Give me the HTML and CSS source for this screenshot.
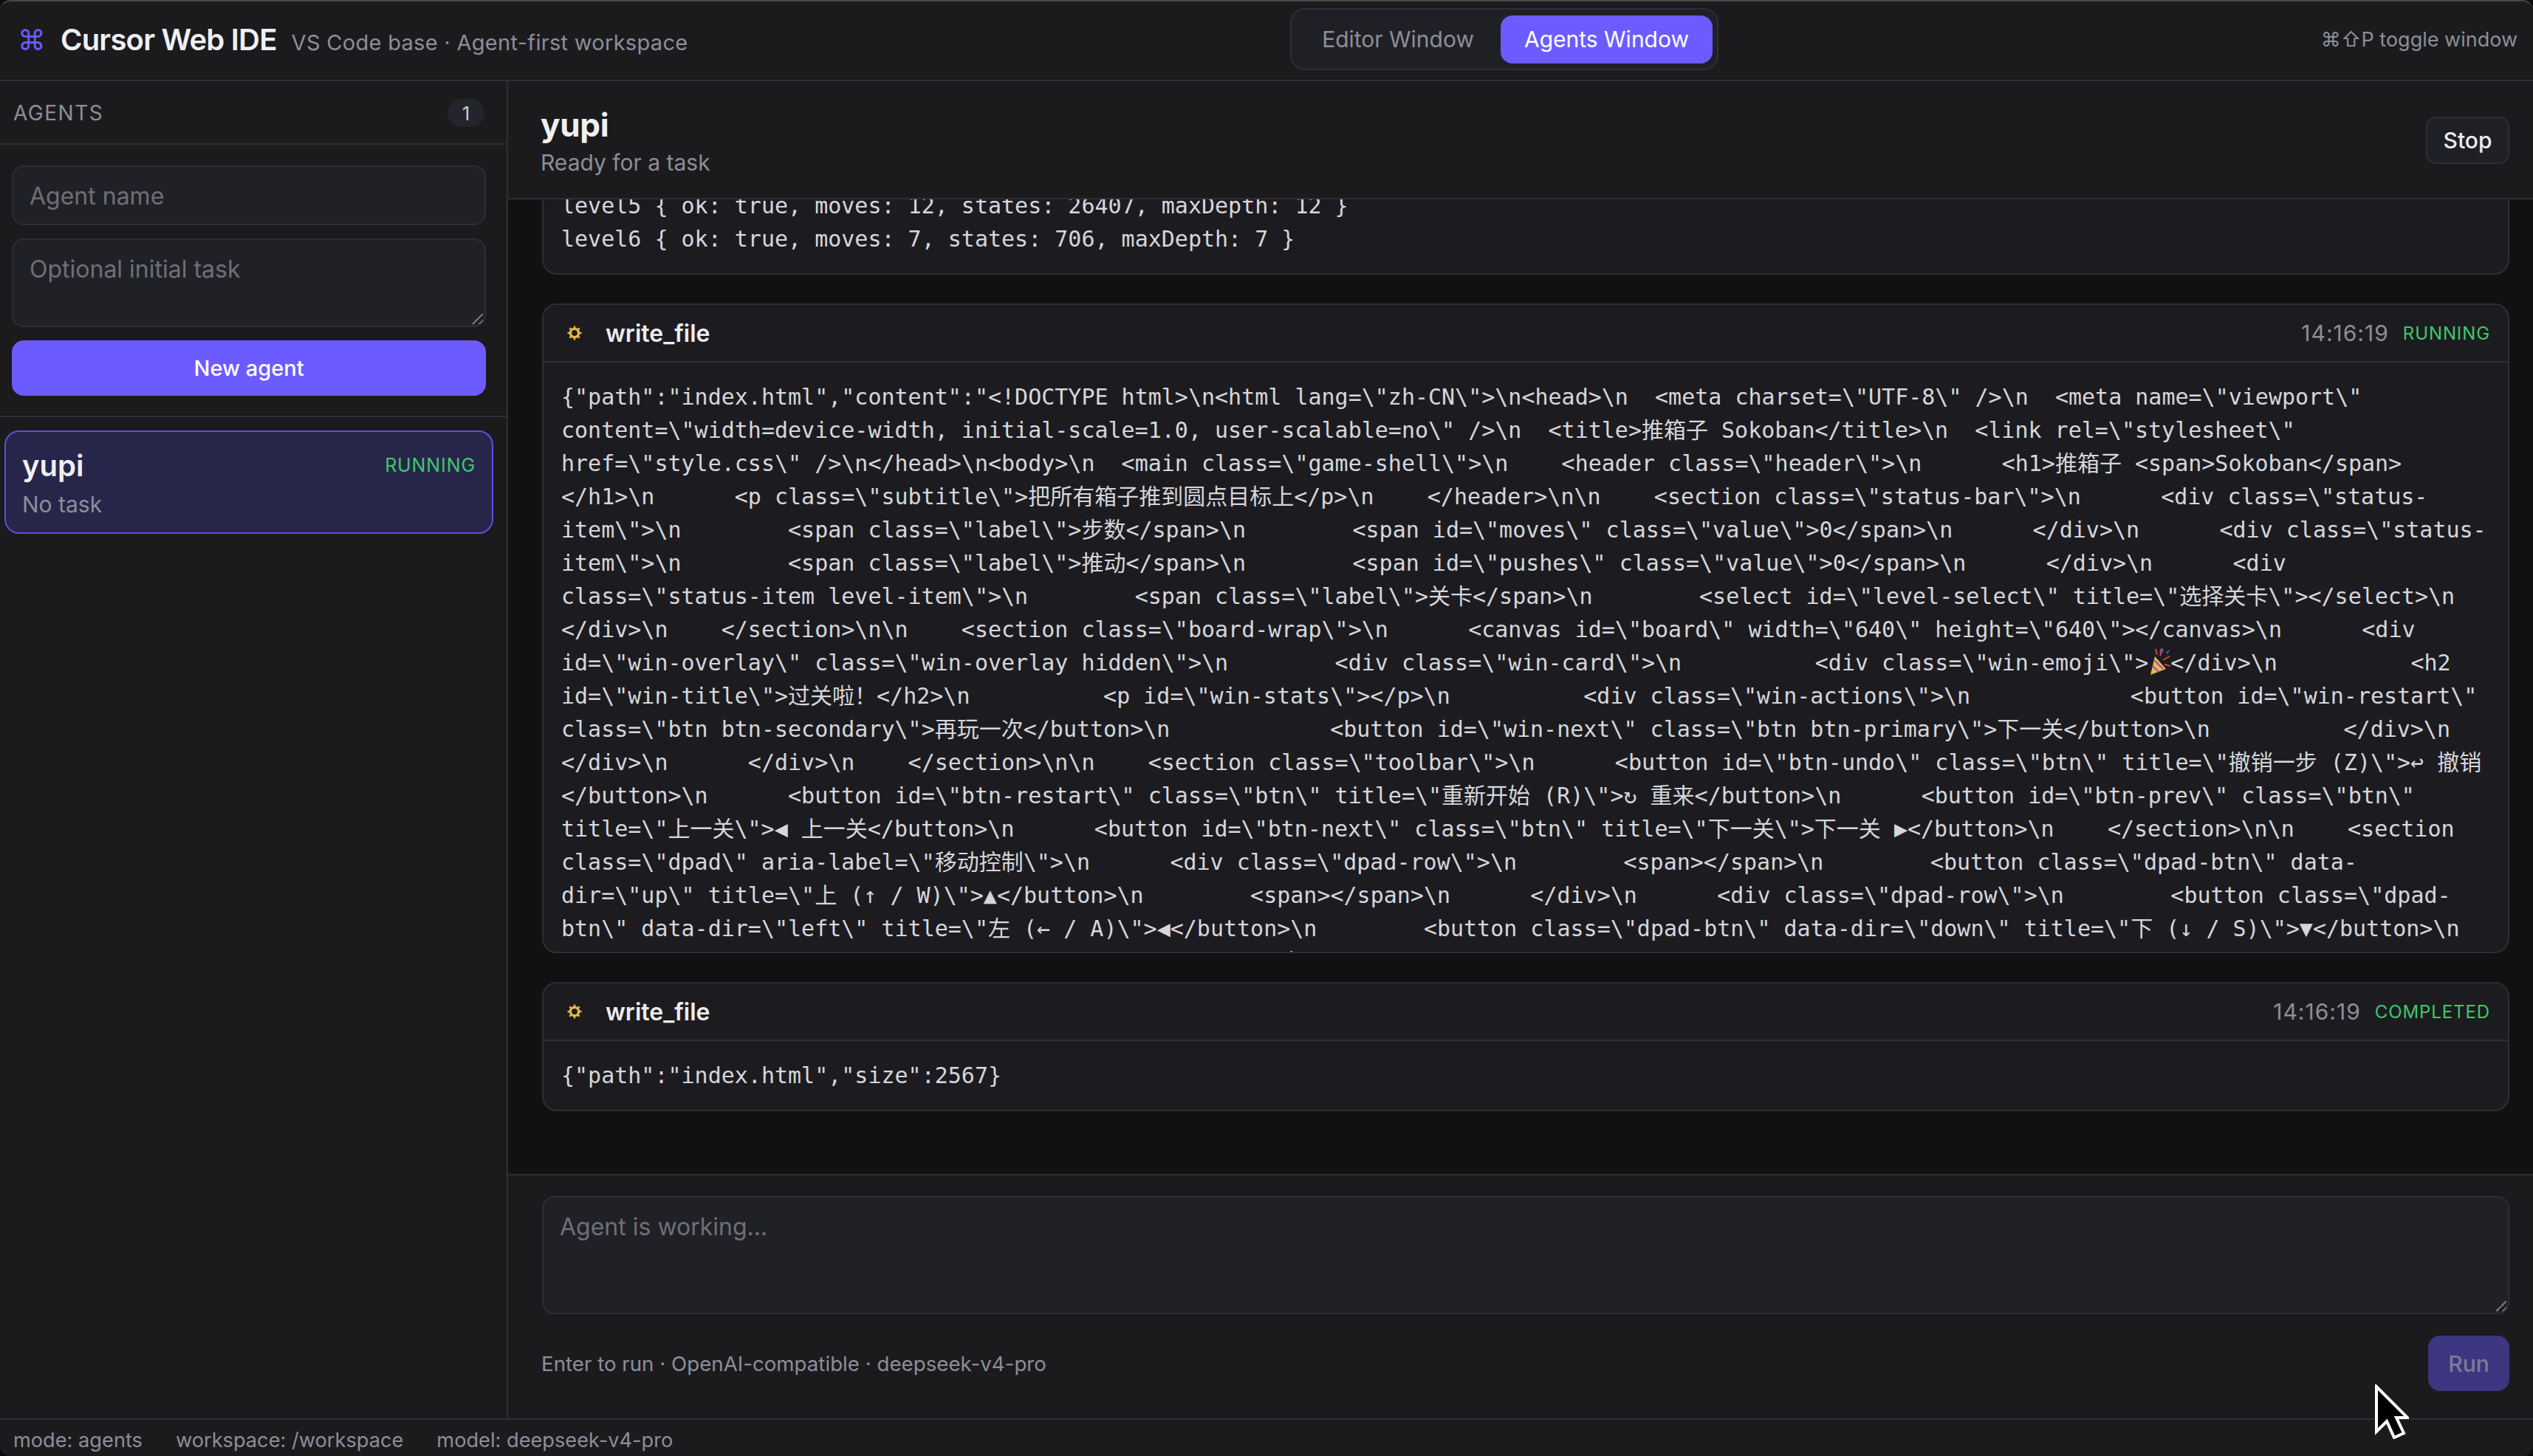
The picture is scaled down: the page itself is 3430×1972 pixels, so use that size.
FILE: index.html
```html
<!DOCTYPE html>
<html lang="en">
<head>
  <meta charset="UTF-8">
  <meta name="viewport" content="width=device-width, initial-scale=1.0">
  <title>Cursor Web IDE</title>
  <link rel="stylesheet" href="styles.css">
</head>
<body>
  <div class="app">
    <header class="topbar">
      <div class="brand">
        <span class="brand-icon">⌘</span>
        <span class="brand-name">Cursor Web IDE</span>
        <span class="brand-sub">VS Code base · Agent-first workspace</span>
      </div>
      <div class="switcher">
        <button class="switch-btn">Editor Window</button>
        <button class="switch-btn active">Agents Window</button>
      </div>
      <div class="hint">⌘⇧P toggle window</div>
    </header>

    <div class="workspace">
      <aside class="sidebar">
        <div class="side-head">
          <span class="side-title">AGENTS</span>
          <span class="count">1</span>
        </div>
        <div class="new-agent">
          <input class="field" type="text" placeholder="Agent name">
          <textarea class="field field-area" placeholder="Optional initial task"></textarea>
          <button class="primary-btn">New agent</button>
        </div>
        <div class="agent-list">
          <div class="agent-card">
            <div class="agent-row">
              <span class="agent-name">yupi</span>
              <span class="status-tag status-tag-big">RUNNING</span>
            </div>
            <div class="agent-task">No task</div>
          </div>
        </div>
      </aside>

      <main class="main">
        <div class="main-head">
          <div>
            <div class="main-title">yupi</div>
            <div class="main-sub">Ready for a task</div>
          </div>
          <button class="stop-btn">Stop</button>
        </div>

        <div class="messages">
          <section class="tool-card tool-card-scrolled">
            <div class="tool-body">level5 { ok: true, moves: 12, states: 26407, maxDepth: 12 }
level6 { ok: true, moves: 7, states: 706, maxDepth: 7 }</div>
          </section>

          <section class="tool-card">
            <div class="tool-head">
              <svg class="gear" viewBox="0 0 20 20"><use href="#gear-icon"></use></svg>
              <span class="tool-name">write_file</span>
              <span class="tool-time">14:16:19</span>
              <span class="status-tag">RUNNING</span>
            </div>
            <div class="tool-body tool-body-long">{"path":"index.html","content":"&lt;!DOCTYPE html&gt;\n&lt;html lang=\"zh-CN\"&gt;\n&lt;head&gt;\n  &lt;meta charset=\"UTF-8\" /&gt;\n  &lt;meta name=\"viewport\" content=\"width=device-width, initial-scale=1.0, user-scalable=no\" /&gt;\n  &lt;title&gt;推箱子 Sokoban&lt;/title&gt;\n  &lt;link rel=\"stylesheet\" href=\"style.css\" /&gt;\n&lt;/head&gt;\n&lt;body&gt;\n  &lt;main class=\"game-shell\"&gt;\n    &lt;header class=\"header\"&gt;\n      &lt;h1&gt;推箱子 &lt;span&gt;Sokoban&lt;/span&gt;&lt;/h1&gt;\n      &lt;p class=\"subtitle\"&gt;把所有箱子推到圆点目标上&lt;/p&gt;\n    &lt;/header&gt;\n\n    &lt;section class=\"status-bar\"&gt;\n      &lt;div class=\"status-item\"&gt;\n        &lt;span class=\"label\"&gt;步数&lt;/span&gt;\n        &lt;span id=\"moves\" class=\"value\"&gt;0&lt;/span&gt;\n      &lt;/div&gt;\n      &lt;div class=\"status-item\"&gt;\n        &lt;span class=\"label\"&gt;推动&lt;/span&gt;\n        &lt;span id=\"pushes\" class=\"value\"&gt;0&lt;/span&gt;\n      &lt;/div&gt;\n      &lt;div class=\"status-item level-item\"&gt;\n        &lt;span class=\"label\"&gt;关卡&lt;/span&gt;\n        &lt;select id=\"level-select\" title=\"选择关卡\"&gt;&lt;/select&gt;\n      &lt;/div&gt;\n    &lt;/section&gt;\n\n    &lt;section class=\"board-wrap\"&gt;\n      &lt;canvas id=\"board\" width=\"640\" height=\"640\"&gt;&lt;/canvas&gt;\n      &lt;div id=\"win-overlay\" class=\"win-overlay hidden\"&gt;\n        &lt;div class=\"win-card\"&gt;\n          &lt;div class=\"win-emoji\"&gt;<svg class="party" viewBox="0 0 30 36"><path d="M9 11 L3 36 L24 28 Z" fill="#e9b949"/><path d="M6 24 L14 32 M8 16 L20 28" stroke="#8a4fd0" stroke-width="2"/><path d="M12 9 L10 1 M16 10 L20 1 M20 16 L29 11 M22 22 L30 24" stroke="#d8433f" stroke-width="2"/><path d="M16 6 L18 0 M25 7 L28 3" stroke="#3c6fd8" stroke-width="2"/></svg>&lt;/div&gt;\n          &lt;h2 id=\"win-title\"&gt;过关啦！&lt;/h2&gt;\n          &lt;p id=\"win-stats\"&gt;&lt;/p&gt;\n          &lt;div class=\"win-actions\"&gt;\n            &lt;button id=\"win-restart\" class=\"btn btn-secondary\"&gt;再玩一次&lt;/button&gt;\n            &lt;button id=\"win-next\" class=\"btn btn-primary\"&gt;下一关&lt;/button&gt;\n          &lt;/div&gt;\n        &lt;/div&gt;\n      &lt;/div&gt;\n    &lt;/section&gt;\n\n    &lt;section class=\"toolbar\"&gt;\n      &lt;button id=\"btn-undo\" class=\"btn\" title=\"撤销一步 (Z)\"&gt;↩ 撤销&lt;/button&gt;\n      &lt;button id=\"btn-restart\" class=\"btn\" title=\"重新开始 (R)\"&gt;↻ 重来&lt;/button&gt;\n      &lt;button id=\"btn-prev\" class=\"btn\" title=\"上一关\"&gt;◀ 上一关&lt;/button&gt;\n      &lt;button id=\"btn-next\" class=\"btn\" title=\"下一关\"&gt;下一关 ▶&lt;/button&gt;\n    &lt;/section&gt;\n\n    &lt;section class=\"dpad\" aria-label=\"移动控制\"&gt;\n      &lt;div class=\"dpad-row\"&gt;\n        &lt;span&gt;&lt;/span&gt;\n        &lt;button class=\"dpad-btn\" data-dir=\"up\" title=\"上 (↑ / W)\"&gt;▲&lt;/button&gt;\n        &lt;span&gt;&lt;/span&gt;\n      &lt;/div&gt;\n      &lt;div class=\"dpad-row\"&gt;\n        &lt;button class=\"dpad-btn\" data-dir=\"left\" title=\"左 (← / A)\"&gt;◀&lt;/button&gt;\n        &lt;button class=\"dpad-btn\" data-dir=\"down\" title=\"下 (↓ / S)\"&gt;▼&lt;/button&gt;\n        &lt;button class=\"dpad-btn\" data-dir=\"right\" title=\"右 (→ / D)\"&gt;▶&lt;/button&gt;\n      &lt;/div&gt;</div>
          </section>

          <section class="tool-card">
            <div class="tool-head">
              <svg class="gear" viewBox="0 0 20 20"><use href="#gear-icon"></use></svg>
              <span class="tool-name">write_file</span>
              <span class="tool-time">14:16:19</span>
              <span class="status-tag">COMPLETED</span>
            </div>
            <div class="tool-body">{"path":"index.html","size":2567}</div>
          </section>
        </div>

        <div class="composer">
          <textarea class="field composer-input" placeholder="Agent is working..."></textarea>
          <div class="composer-foot">
            <span class="composer-hint">Enter to run · OpenAI-compatible · deepseek-v4-pro</span>
            <button class="run-btn">Run</button>
          </div>
        </div>
      </main>
    </div>

    <footer class="statusbar">
      <span>mode: agents</span>
      <span>workspace: /workspace</span>
      <span>model: deepseek-v4-pro</span>
    </footer>
  </div>

  <svg class="pointer" viewBox="0 0 46 74">
    <path d="M2 3 L2 64 L16 50 L26 72 L39 66 L29 45 L44 45 Z" fill="#000" stroke="#fff" stroke-width="4"/>
  </svg>

  <svg class="icon-defs">
    <symbol id="gear-icon" viewBox="0 0 20 20">
      <circle cx="10" cy="10" r="5.6" fill="none" stroke="#e5b84a" stroke-width="3.4"/>
      <g stroke="#e5b84a" stroke-width="2.4">
        <path d="M10 0.5V4M10 16V19.5M0.5 10H4M16 10H19.5M3.3 3.3L5.7 5.7M14.3 14.3L16.7 16.7M16.7 3.3L14.3 5.7M5.7 14.3L3.3 16.7"/>
      </g>
    </symbol>
  </svg>
</body>
</html>
```

FILE: styles.css
```css
* {
  box-sizing: border-box;
}

html,
body {
  height: 100%;
}

body {
  margin: 0;
  background-color: #0b0b0c;
  color: #ececf0;
  font-family: 'Inter', 'Noto Sans', sans-serif;
  color-scheme: dark;
  overflow: hidden;
}

button,
input,
textarea {
  font-family: inherit;
}

.app {
  height: 100%;
  display: flex;
  flex-direction: column;
  background-color: #1b1b1e;
  border-top: 2px solid #47474b;
  border-radius: 14px;
  overflow: hidden;
}

/* top bar */
.topbar {
  height: 108px;
  flex-shrink: 0;
  display: flex;
  justify-content: space-between;
  align-items: center;
  padding: 0 21px 4px 24px;
  border-bottom: 2px solid #2e2e36;
}

.brand {
  display: flex;
  align-items: baseline;
  gap: 20px;
}

.brand-icon {
  color: #6c5cff;
  font-size: 38px;
  line-height: 1;
  font-family: 'DejaVu Sans', sans-serif;
}

.brand-name {
  font-size: 40px;
  font-weight: 600;
  letter-spacing: -0.8px;
  color: #f0f0f3;
}

.brand-sub {
  font-size: 29px;
  color: #8e8e98;
  letter-spacing: 0.3px;
}

.switcher {
  display: flex;
  align-items: center;
  gap: 4px;
  height: 84px;
  padding: 0 6px 0 9px;
  background-color: #1f2025;
  border: 2px solid #2e2e36;
  border-radius: 20px;
}

.switch-btn {
  height: 65px;
  padding: 0 32px;
  border: none;
  border-radius: 16px;
  background: none;
  color: #8e8e98;
  font-size: 30px;
}

.switch-btn.active {
  background-color: #6c5cff;
  color: #fff;
}

.hint {
  font-size: 27px;
  color: #8e8e98;
  font-family: 'Inter', 'DejaVu Sans', sans-serif;
}

.workspace {
  flex: 1;
  min-height: 0;
  display: flex;
}

/* sidebar */
.sidebar {
  width: 688px;
  flex-shrink: 0;
  border-right: 2px solid #2e2e36;
  display: flex;
  flex-direction: column;
}

.side-head {
  height: 86px;
  flex-shrink: 0;
  display: flex;
  justify-content: space-between;
  align-items: center;
  padding: 2px 30px 0 18px;
  border-bottom: 2px solid #2e2e36;
}

.side-title {
  font-size: 28px;
  letter-spacing: 1.5px;
  color: #8e8e98;
}

.count {
  width: 50px;
  height: 38px;
  border-radius: 19px;
  background-color: #24252c;
  font-size: 26px;
  color: #c8c8d0;
  display: flex;
  align-items: center;
  justify-content: center;
}

.new-agent {
  padding: 28px 28px 27px 16px;
  border-bottom: 2px solid #2e2e36;
  display: flex;
  flex-direction: column;
  gap: 18px;
}

.field {
  width: 100%;
  display: block;
  background-color: #202126;
  border: 2px solid #2e2e36;
  border-radius: 16px;
  color: #ececf0;
  font-size: 32px;
  padding: 0 22px;
  outline: none;
}

.field::placeholder {
  color: #6f6f77;
}

.new-agent input {
  height: 81px;
  padding-top: 2px;
}

.field-area,
.composer-input {
  resize: none;
  background-image: linear-gradient(135deg, transparent 50%, #77777f 50%, #77777f 60%, transparent 60%, transparent 78%, #77777f 78%, #77777f 88%, transparent 88%);
  background-size: 15px 15px;
  background-position: right 2px bottom 2px;
  background-repeat: no-repeat;
}

.field-area {
  height: 120px;
  padding-top: 20px;
}

.primary-btn {
  height: 75px;
  border: none;
  border-radius: 16px;
  background-color: #6c5cff;
  color: #fff;
  font-size: 29px;
  font-weight: 500;
}

.agent-list {
  padding: 18px 18px 18px 6px;
}

.agent-card {
  height: 140px;
  padding: 0 22px;
  background-color: #27264a;
  border: 2px solid #5d50dc;
  border-radius: 20px;
  display: flex;
  flex-direction: column;
  justify-content: center;
  gap: 10px;
}

.agent-row {
  display: flex;
  justify-content: space-between;
  align-items: center;
}

.agent-name {
  font-size: 40px;
  font-weight: 600;
  color: #f0f0f3;
}

.agent-task {
  font-size: 30px;
  color: #8e8e98;
}

.status-tag {
  font-size: 24px;
  letter-spacing: 0.9px;
  color: #3fc96b;
}

.status-tag-big {
  font-size: 25px;
}

/* main column */
.main {
  flex: 1;
  min-width: 0;
  display: flex;
  flex-direction: column;
  background-color: #111112;
}

.main-head {
  height: 160px;
  flex-shrink: 0;
  display: flex;
  justify-content: space-between;
  align-items: center;
  padding: 1px 32px 0 44px;
  background-color: #1b1b1e;
  border-bottom: 2px solid #2e2e36;
}

.main-title {
  font-size: 44px;
  font-weight: 650;
  letter-spacing: -0.3px;
  color: #f0f0f3;
}

.main-sub {
  font-size: 30px;
  color: #8e8e98;
  margin-top: 6px;
}

.stop-btn {
  width: 113px;
  height: 64px;
  background-color: #1f2025;
  border: 2px solid #2e2e36;
  border-radius: 14px;
  color: #ececf0;
  font-size: 30px;
  font-weight: 500;
}

.messages {
  flex: 1;
  min-height: 0;
  overflow: hidden;
  padding: 0 32px 0 46px;
  display: flex;
  flex-direction: column;
  gap: 39px;
}

.tool-card {
  flex-shrink: 0;
  background-color: #1c1c20;
  border: 2px solid #2e2e36;
  border-radius: 20px;
  overflow: hidden;
}

/* list is scrolled, only the tail of the first card shows */
.tool-card-scrolled {
  margin-top: -38px;
  border-top: none;
  border-radius: 0 0 20px 20px;
}

.tool-head {
  height: 78px;
  display: flex;
  align-items: center;
  padding: 0 24px 0 32px;
  border-bottom: 2px solid #2e2e36;
}

.gear {
  width: 20px;
  height: 20px;
  margin-right: 32px;
}

.tool-name {
  font-size: 32px;
  font-weight: 600;
  color: #ececf0;
  margin-right: auto;
}

.tool-time {
  font-size: 30px;
  letter-spacing: 1px;
  color: #8e8e98;
  margin-right: 19px;
}

.tool-body {
  padding: 24px 26px 24px 24px;
  font-family: 'DejaVu Sans Mono', 'Noto Sans CJK SC', monospace;
  font-size: 30px;
  line-height: 45px;
  color: #d6d6dc;
  white-space: pre-wrap;
  word-break: break-word;
}

.tool-body-long {
  height: 798px;
  overflow: hidden;
}

.party {
  width: 30px;
  height: 36px;
  vertical-align: -6px;
}

/* composer */
.composer {
  flex-shrink: 0;
  height: 331px;
  padding: 28px 32px 0 46px;
  background-color: #1b1b1e;
  border-top: 2px solid #2e2e36;
}

.composer-input {
  height: 160px;
  padding-top: 20px;
}

.composer-foot {
  display: flex;
  justify-content: space-between;
  align-items: center;
  margin-top: 29px;
}

.composer-hint {
  font-size: 27.7px;
  color: #8e8e98;
  margin-left: -1px;
}

.run-btn {
  width: 110px;
  height: 75px;
  border: none;
  border-radius: 16px;
  background-color: #3d3680;
  color: #7f7c95;
  font-size: 30px;
  font-weight: 500;
}

/* status bar */
.statusbar {
  height: 51px;
  flex-shrink: 0;
  display: flex;
  align-items: center;
  gap: 45px;
  padding: 6px 18px 0;
  font-size: 27.2px;
  color: #8e8e98;
  border-top: 2px solid #2e2e36;
}

.pointer {
  position: absolute;
  left: 3216px;
  top: 1875px;
  width: 46px;
  height: 74px;
}

.icon-defs {
  display: none;
}
```
